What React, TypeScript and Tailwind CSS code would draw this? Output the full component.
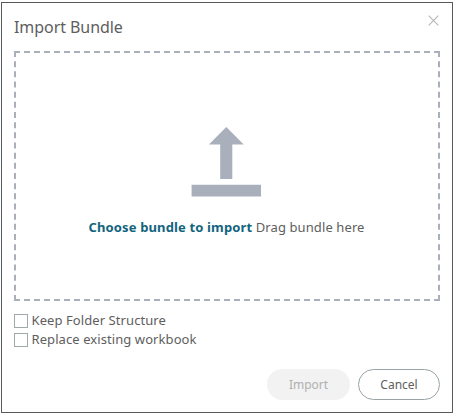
import { useState } from "react";

const CheckboxRow = ({
  label,
  checked,
  onChange,
}: {
  label: string;
  checked: boolean;
  onChange: (checked: boolean) => void;
}) => (
  <label className="flex h-[19px] items-center gap-[3.500px] text-[13px] tracking-[0.08px]">
    <input
      type="checkbox"
      checked={checked}
      onChange={(e) => onChange(e.target.checked)}
      className="size-3.5 shrink-0 appearance-none border border-[#9fa9ab] bg-white checked:bg-[#12647e]"
    />
    <span>{label}</span>
  </label>
);

export default function App() {
  const [keepFolders, setKeepFolders] = useState(false);
  const [replaceExisting, setReplaceExisting] = useState(false);

  return (
    <div className="h-[415px] w-[456px] bg-white pt-0.5 pl-px font-['Noto_Sans',sans-serif] text-[#5e5e5e]">
      <div className="flex h-[411px] w-[452px] flex-col border border-[#58595b] px-3 pb-3">
        <header className="flex h-12 justify-between">
          <h1 className="pt-3 text-base leading-6 tracking-[-0.06px]">Import Bundle</h1>
          <button aria-label="Close" className="mt-3 mr-px size-[11px]">
            <svg viewBox="0 0 11 11" className="size-[11px]" fill="none" stroke="#b8b8b8" strokeWidth="1.2">
              <path d="M.7 .7 10.3 10.3M10.3 .7 .7 10.3" />
            </svg>
          </button>
        </header>

        <div className="flex h-[250px] shrink-0 flex-col items-center border-2 border-dashed border-[#a9b0bb] pt-[74px]">
          <svg viewBox="0 0 70 70" className="mr-0.5 size-[70px]" fill="#a9b0bb">
            <path d="M35.300 0 52.700 17.500H41.300V52H29.200V17.500H17.900Z" />
            <path d="M.6 57.800H70V69.500H.6Z" />
          </svg>
          <p className="mt-5 mr-px text-[13px] leading-5 tracking-[0.1px]">
            <button className="font-bold tracking-[0.14px] text-[#12647e]">Choose bundle to import</button> Drag bundle here
          </p>
        </div>

        <div className="mt-2.5">
          <CheckboxRow label="Keep Folder Structure" checked={keepFolders} onChange={setKeepFolders} />
          <CheckboxRow label="Replace existing workbook" checked={replaceExisting} onChange={setReplaceExisting} />
        </div>

        <footer className="mt-auto flex justify-end gap-2 text-xs">
          <button disabled className="h-[31px] w-[83px] rounded-full bg-[#f2f2f2] text-[#b0b0b0]">
            Import
          </button>
          <button className="h-[31px] w-[82px] rounded-full border border-[#98a3a5] bg-white">Cancel</button>
        </footer>
      </div>
    </div>
  );
}
